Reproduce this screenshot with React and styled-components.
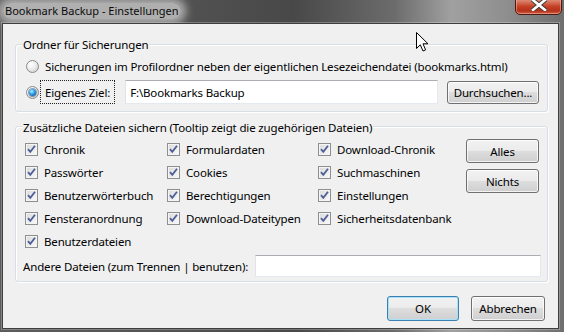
import React from 'react';
import styled, { createGlobalStyle, css } from 'styled-components';

const Global = createGlobalStyle`
  html, body { margin: 0; padding: 0; background: #5a5a5a; }
  body { font-family: "Noto Sans", "Open Sans", sans-serif; font-size: 11.5px; letter-spacing: -0.15px; color: #000; }
  * { box-sizing: border-box; }
`;

const Window = styled.div`
  position: relative;
  width: 564px;
  height: 332px;
  overflow: hidden;
  display: flex;
  flex-direction: column;
  padding: 0 5px 3px 2px;
  background: linear-gradient(90deg, #5c5c5c 0%, #535353 30%, #484848 52%, #6c6c6c 70%, #a0a0a0 80%, #8e8e8e 90%, #6e6e6e 100%);
`;

const TitleBar = styled.div`
  height: 23px;
  display: flex;
  align-items: flex-start;
  justify-content: space-between;
`;

const TitleText = styled.span`
  margin-top: 3px;
  margin-left: 1px;
  padding: 0 2px;
  line-height: 16px;
  font-size: 11px;
  letter-spacing: 0;
  color: #0c0c0c;
  white-space: nowrap;
  background: rgba(205, 205, 205, 0.75);
  border-radius: 8px;
  box-shadow: 0 0 8px 5px rgba(205, 205, 205, 0.75);
`;

const CloseButton = styled.div`
  width: 47px;
  height: 18px;
  margin-top: -3px;
  margin-right: -3px;
  border: 1px solid #4a1a12;
  border-radius: 0 0 5px 5px;
  background: linear-gradient(180deg, #e6a08f 0%, #d46a52 30%, #c43e22 55%, #b5321a 80%, #d2624a 100%);
  box-shadow: inset 0 0 0 1px rgba(255, 200, 180, 0.45);
  display: flex;
  align-items: center;
  justify-content: center;
`;

const Client = styled.div`
  flex: 1;
  border: 1px solid #3e3e3e;
  background: #f0f0f0;
  display: flex;
  flex-direction: column;
  padding: 20px 10px 0 12px;
  box-shadow: 0 0 0 1px rgba(255, 255, 255, 0.25);
`;

const Group = styled.div`
  display: flex;
  flex-direction: column;
  border: 1px solid #d5dfe5;
  border-radius: 3px;
  box-shadow: inset 1px 1px 0 #fff, 1px 1px 0 #fff;
  margin-top: ${(p) => p.$gap || 0}px;
  padding: ${(p) => p.$pad};
`;

const GroupTitle = styled.div`
  align-self: flex-start;
  margin-top: ${(p) => p.$shift}px;
  margin-left: ${(p) => p.$indent}px;
  padding: 0 1px;
  line-height: 16px;
  white-space: nowrap;
  background: #f0f0f0;
`;

const Row = styled.div`
  display: flex;
  align-items: center;
  margin-top: ${(p) => p.$top || 0}px;
  height: ${(p) => p.$h}px;
`;

const RadioCircle = styled.span`
  flex: none;
  width: 13px;
  height: 13px;
  border-radius: 50%;
  border: 1px solid #8a8a8a;
  background: radial-gradient(circle at 35% 30%, #ffffff 0%, #f2f2f2 35%, #d6d6d6 80%, #c8c8c8 100%);
  display: flex;
  align-items: center;
  justify-content: center;
  ${(p) =>
    p.$checked &&
    css`
      &::after {
        content: '';
        width: 7px;
        height: 7px;
        border-radius: 50%;
        background: radial-gradient(circle at 40% 35%, #bfeeff 0%, #3fb0ee 35%, #0f62b8 75%, #0a3e7a 100%);
        box-shadow: 0 0 0 1px rgba(30, 70, 120, 0.5);
      }
    `}
`;

const RadioLabel = styled.span`
  margin-left: 1px;
  padding: 0 4px;
  border: 1px ${(p) => (p.$focus ? 'dotted #222' : 'solid transparent')};
  height: ${(p) => (p.$focus ? '24px' : 'auto')};
  display: flex;
  align-items: center;
  white-space: nowrap;
`;

const TextBox = styled.div`
  flex: ${(p) => (p.$w ? 'none' : '1')};
  width: ${(p) => (p.$w ? `${p.$w}px` : 'auto')};
  height: ${(p) => p.$h}px;
  margin-left: ${(p) => p.$ml || 0}px;
  background: #fff;
  border: 1px solid #e3e9ef;
  border-top-color: #abadb3;
  border-left-color: #e2e3ea;
  padding: 0 4px;
  display: flex;
  align-items: center;
  white-space: nowrap;
`;

const Button = styled.div`
  flex: none;
  width: ${(p) => p.$w}px;
  height: ${(p) => p.$h}px;
  margin-left: ${(p) => p.$ml || 0}px;
  border: 1px solid ${(p) => (p.$default ? '#3c7fb1' : '#707070')};
  border-radius: 3px;
  background: linear-gradient(180deg, #f2f2f2 0%, #ebebeb 48%, #dddddd 50%, #cfcfcf 100%);
  box-shadow: inset 0 0 0 1px ${(p) => (p.$default ? '#a6e3f8' : 'rgba(255,255,255,0.75)')};
  display: flex;
  align-items: center;
  justify-content: center;
  white-space: nowrap;
  color: #000;
`;

const MainRow = styled.div`
  display: flex;
  align-items: flex-start;
  margin-top: 2px;
`;

const CheckGrid = styled.div`
  flex: 1;
  margin-left: 2px;
  display: grid;
  grid-template-columns: 142px 151px auto;
  grid-auto-rows: 23px;
`;

const CheckItem = styled.div`
  display: flex;
  align-items: center;
  gap: 6px;
  white-space: nowrap;
`;

const CheckBoxSquare = styled.span`
  flex: none;
  width: 13px;
  height: 13px;
  border: 1px solid #8e8f8f;
  background: linear-gradient(135deg, #d9d9d9 0%, #ededed 60%, #fbfbfb 100%);
  box-shadow: inset 0 0 0 1px #f4f4f4;
  display: flex;
  align-items: center;
  justify-content: center;
`;

const SideButtons = styled.div`
  display: flex;
  flex-direction: column;
  gap: 6px;
  margin-top: 1px;
  margin-right: 2px;
`;

const OtherRow = styled.div`
  display: flex;
  align-items: center;
  justify-content: space-between;
  margin-top: 2px;
  white-space: nowrap;
`;

const FooterRow = styled.div`
  display: flex;
  justify-content: flex-end;
  margin-top: 14px;
  padding-right: 3px;
`;

const Cursor = styled.svg`
  position: absolute;
  left: 416px;
  top: 32px;
`;

const CheckBox = ({ children }) => (
  <CheckItem>
    <CheckBoxSquare>
      <svg width="9" height="9" viewBox="0 0 9 9">
        <path d="M1 4.2 L3.3 6.8 L8 0.8" fill="none" stroke="#4c5e95" strokeWidth="1.8" />
      </svg>
    </CheckBoxSquare>
    {children}
  </CheckItem>
);

const items = [
  'Chronik', 'Formulardaten', 'Download-Chronik',
  'Passwörter', 'Cookies', 'Suchmaschinen',
  'Benutzerwörterbuch', 'Berechtigungen', 'Einstellungen',
  'Fensteranordnung', 'Download-Dateitypen', 'Sicherheitsdatenbank',
  'Benutzerdateien',
];

export default function App() {
  return (
    <>
      <Global />
      <Window>
        <TitleBar>
          <TitleText>Bookmark Backup - Einstellungen</TitleText>
          <CloseButton>
            <svg width="16" height="12" viewBox="0 0 16 12" style={{ marginTop: -2 }}>
              <path d="M2 1 L14 11 M14 1 L2 11" stroke="#3a3a3a" strokeWidth="4.5" strokeLinecap="square" />
              <path d="M2 1 L14 11 M14 1 L2 11" stroke="#fff" strokeWidth="2.6" strokeLinecap="square" />
            </svg>
          </CloseButton>
        </TitleBar>
        <Client>
          <Group $pad="0 8px 7px 10px">
            <GroupTitle $shift={-8} $indent={-4}>Ordner für Sicherungen</GroupTitle>
            <Row $top={5} $h={16}>
              <RadioCircle />
              <RadioLabel>Sicherungen im Profilordner neben der eigentlichen Lesezeichendatei (bookmarks.html)</RadioLabel>
            </Row>
            <Row $top={6} $h={24}>
              <RadioCircle $checked />
              <RadioLabel $focus>Eigenes Ziel:</RadioLabel>
              <TextBox $h={24} $ml={10}>F:\Bookmarks Backup</TextBox>
              <Button $w={92} $h={23} $ml={9}>Durchsuchen...</Button>
            </Row>
          </Group>
          <Group $gap={14} $pad="0 6px 4px 7px">
            <GroupTitle $shift={-7} $indent={-1}>Zusätzliche Dateien sichern (Tooltip zeigt die zugehörigen Dateien)</GroupTitle>
            <MainRow>
              <CheckGrid>
                {items.map((t) => (
                  <CheckBox key={t}>{t}</CheckBox>
                ))}
              </CheckGrid>
              <SideButtons>
                <Button $w={73} $h={24}>Alles</Button>
                <Button $w={73} $h={24}>Nichts</Button>
              </SideButtons>
            </MainRow>
            <OtherRow>
              <span>Andere Dateien (zum Trennen | benutzen):</span>
              <TextBox $w={286} $h={22} />
            </OtherRow>
          </Group>
          <FooterRow>
            <Button $w={72} $h={25} $default>OK</Button>
            <Button $w={74} $h={25} $ml={12}>Abbrechen</Button>
          </FooterRow>
        </Client>
        <Cursor width="14" height="22" viewBox="0 0 14 22">
          <path d="M0.5 0.5 L0.5 16.5 L4.3 12.8 L7 19 L9.6 17.9 L7 11.8 L12 11.8 Z" fill="#fff" stroke="#000" strokeWidth="1" strokeLinejoin="miter" />
        </Cursor>
      </Window>
    </>
  );
}
